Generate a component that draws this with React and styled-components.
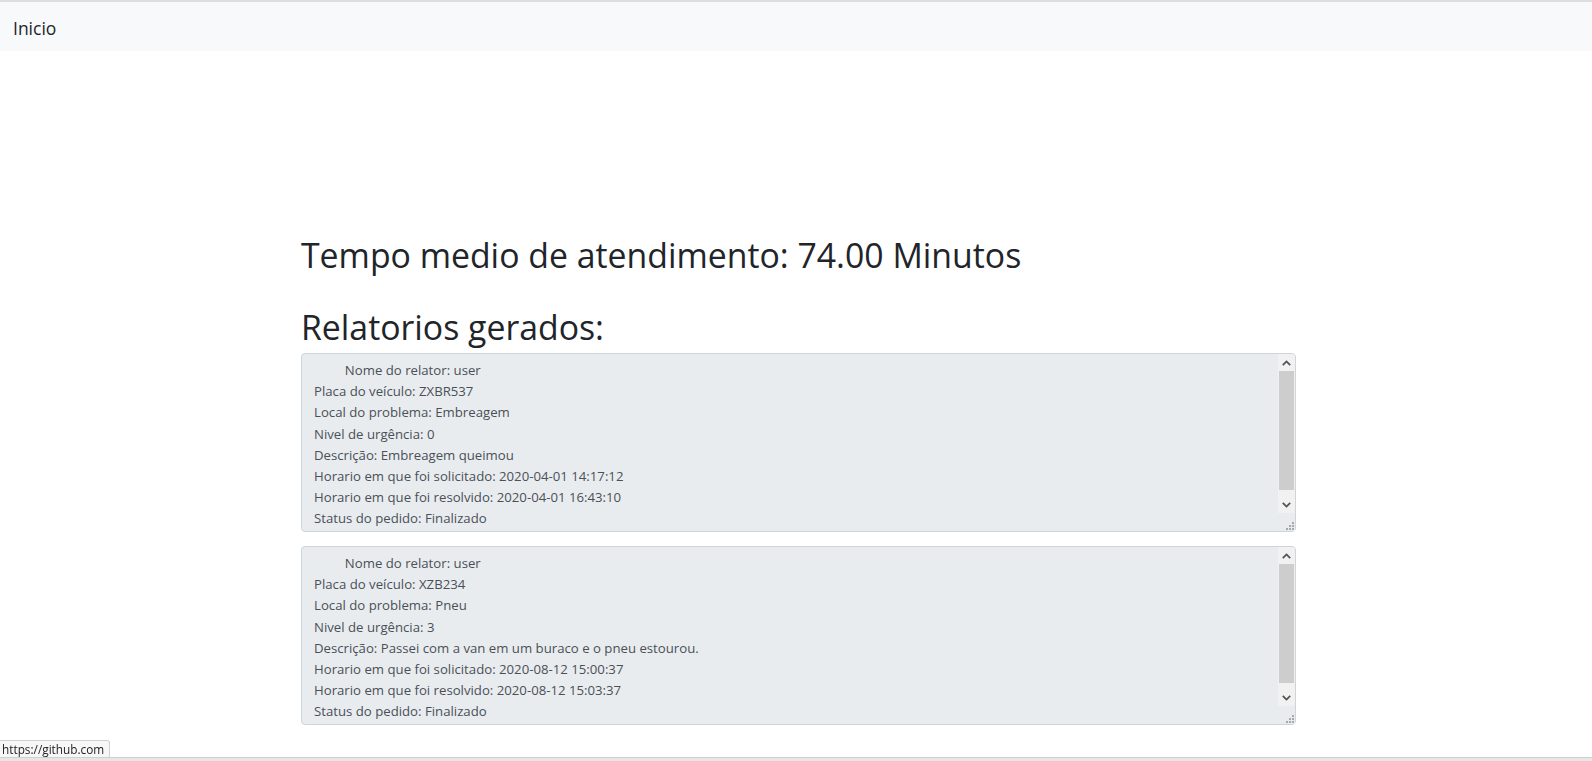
import React from "react";
import styled, { createGlobalStyle } from "styled-components";

const reports = [
  {
    relator: "user",
    placa: "ZXBR537",
    local: "Embreagem",
    urgencia: 0,
    descricao: "Embreagem queimou",
    solicitado: "2020-04-01 14:17:12",
    resolvido: "2020-04-01 16:43:10",
    status: "Finalizado",
  },
  {
    relator: "user",
    placa: "XZB234",
    local: "Pneu",
    urgencia: 3,
    descricao: "Passei com a van em um buraco e o pneu estourou.",
    solicitado: "2020-08-12 15:00:37",
    resolvido: "2020-08-12 15:03:37",
    status: "Finalizado",
  },
];

// texto do relatorio (a indentação da primeira linha vem do template original)
const toText = (r) =>
  `         Nome do relator: ${r.relator}
Placa do veículo: ${r.placa}
Local do problema: ${r.local}
Nivel de urgência: ${r.urgencia}
Descrição: ${r.descricao}
Horario em que foi solicitado: ${r.solicitado}
Horario em que foi resolvido: ${r.resolvido}
Status do pedido: ${r.status}`;

const grip =
  "data:image/svg+xml;utf8,<svg xmlns='http://www.w3.org/2000/svg' width='8' height='8' viewBox='0 0 8 8'><g fill='%23a8a8a8'><rect x='6' y='0' width='2' height='2'/><rect x='3' y='3' width='2' height='2'/><rect x='6' y='3' width='2' height='2'/><rect x='0' y='6' width='2' height='2'/><rect x='3' y='6' width='2' height='2'/><rect x='6' y='6' width='2' height='2'/></g></svg>";

function Arrow({ dir }) {
  return (
    <svg width="9" height="6" viewBox="0 0 9 6">
      <path
        d={dir === "up" ? "M0.8 5.2 L4.5 1.5 L8.2 5.2" : "M0.8 0.8 L4.5 4.5 L8.2 0.8"}
        fill="none"
        stroke="#505050"
        strokeWidth="1.7"
      />
    </svg>
  );
}

// o scrollbar nativo não aparece no print, então desenha um por cima
function Scrollbar() {
  return (
    <Bar>
      <BarButton>
        <Arrow dir="up" />
      </BarButton>
      <Track>
        <Thumb />
      </Track>
      <BarButton>
        <Arrow dir="down" />
      </BarButton>
    </Bar>
  );
}

function App() {
  return (
    <>
      <GlobalStyle />
      <Navbar>
        <Brand href="#">Inicio</Brand>
      </Navbar>
      <Main>
        <Title>Tempo medio de atendimento: 74.00 Minutos</Title>
        <Title>Relatorios gerados:</Title>
        <List>
          {reports.map((r, i) => (
            <ReportBox key={i}>
              <Report readOnly value={toText(r)} />
              <Scrollbar />
            </ReportBox>
          ))}
        </List>
      </Main>
      <StatusBubble>https://github.com</StatusBubble>
      <BottomStrip />
    </>
  );
}

const GlobalStyle = createGlobalStyle`
  body {
    margin: 0;
    background: #fff;
    color: #212529;
    font-family: "Open Sans", "Noto Sans", Arial, sans-serif;
  }
`;

const Navbar = styled.nav`
  display: flex;
  align-items: center;
  height: 49px;
  padding: 0 13px;
  background: #f8f9fa;
  border-top: 2px solid #dcdee0;
`;

const Brand = styled.a`
  font-size: 17.5px;
  color: #212529;
  text-decoration: none;
  line-height: 1;
  margin-top: 4px;
`;

const Main = styled.main`
  width: 995px;
  padding: 176px 0 0 301px;
`;

const Title = styled.h1`
  margin: 0 0 16px;
  font-size: 33.8px;
  font-weight: 400;
  line-height: 56px;
  color: #212529;
`;

const List = styled.div`
  display: flex;
  flex-direction: column;
  gap: 14px;
  margin-top: -18px;
`;

const ReportBox = styled.div`
  position: relative;
`;

const Report = styled.textarea`
  display: block;
  box-sizing: border-box;
  width: 100%;
  height: 179px;
  padding: 6px 30px 6px 12px;
  margin: 0;
  font-family: "Open Sans", "Noto Sans", Arial, sans-serif;
  font-size: 13.2px;
  line-height: 21.2px;
  color: #495057;
  background: #e9ecef;
  border: 1px solid #ced4da;
  border-radius: 4px;
  outline: none;
  resize: vertical;
  overflow: hidden;

  &::-webkit-resizer {
    background-color: #e9ecef;
    background-image: url("${grip}");
    background-repeat: no-repeat;
    background-position: 6px 6px;
  }
`;

const Bar = styled.div`
  position: absolute;
  top: 1px;
  right: 1px;
  bottom: 19px;
  width: 17px;
  display: flex;
  flex-direction: column;
  background: #f1f1f1;
  border-top-right-radius: 3px;
`;

const BarButton = styled.div`
  flex: 0 0 17px;
  display: flex;
  align-items: center;
  justify-content: center;
`;

const Track = styled.div`
  flex: 1;
  display: flex;
  flex-direction: column;
  padding: 0 1px;
`;

const Thumb = styled.div`
  height: 95%;
  background: #cdcdcd;
`;

const StatusBubble = styled.div`
  position: fixed;
  left: 0;
  bottom: 3px;
  padding: 1px 5px 0 2px;
  font-family: "Open Sans", Arial, sans-serif;
  font-size: 11.8px;
  line-height: 15px;
  color: #222;
  background: #f7f7f7;
  border: 1px solid #d0d0d0;
  border-left: none;
  border-radius: 0 3px 0 0;
  z-index: 2;
`;

const BottomStrip = styled.div`
  position: fixed;
  left: 0;
  right: 0;
  bottom: 0;
  height: 3px;
  background: #e6e6e6;
  border-top: 1px solid #cfcfcf;
`;

export default App;
